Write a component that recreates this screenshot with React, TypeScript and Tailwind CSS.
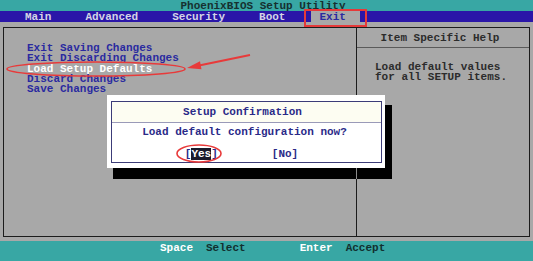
const menu = ["Main", "Advanced", "Security", "Boot"];

const exitItems = [
  "Exit Saving Changes",
  "Exit Discarding Changes",
  "Load Setup Defaults",
  "Discard Changes",
  "Save Changes",
];

function Overlay() {
  // red annotation marks drawn over the screenshot
  return (
    <svg
      className="absolute left-0 top-0 pointer-events-none"
      width={533}
      height={261}
      viewBox="0 0 533 261"
    >
      <ellipse cx={96} cy={69} rx={89} ry={7} fill="none" stroke="#e83a3a" strokeWidth={1.6} />
      <ellipse cx={199} cy={153.5} rx={22} ry={8.5} fill="none" stroke="#e83a3a" strokeWidth={1.6} />
      <line x1={250} y1={55} x2={199} y2={65.5} stroke="#e83a3a" strokeWidth={2} />
      <polygon points="187,68 200,61.3 201.5,69.3" fill="#e83a3a" />
    </svg>
  );
}

export default function App() {
  return (
    <div className="relative flex h-[261px] w-[533px] flex-col overflow-hidden font-['Liberation_Mono',monospace] text-[11px] font-bold leading-[10px]">
      <div className="flex h-[11px] items-center justify-center bg-[#38a7a4] pr-[7px] text-[#163030]">
        PhoenixBIOS Setup Utility
      </div>

      <div className="flex h-[11px] items-stretch gap-[18px] bg-[#2a16a8] pl-[17px] text-[#d4d4e6]">
        {menu.map((m) => (
          <span key={m} className="flex items-center px-2">
            {m}
          </span>
        ))}
        <span className="flex items-center bg-[#a8a8a8] pl-2 pr-[14px] text-[#2a2aa0]">Exit</span>
      </div>

      <div className="flex flex-1 bg-[#a8a8a8] px-[3px] pb-[4px] pt-[5px]">
        <div className="flex flex-1 border border-[#1c1c1c]">
          <div className="flex w-[353px] flex-col border-r border-[#1c1c1c] pl-[23px] pt-[15px] leading-[10.25px]">
            {exitItems.map((item) => (
              <div
                key={item}
                className={item === "Load Setup Defaults" ? "text-white" : "text-[#2a2aa0]"}
              >
                {item}
              </div>
            ))}
          </div>
          <div className="flex flex-1 flex-col text-[#2c2c2c]">
            <div className="flex h-[20px] items-center justify-center border-b border-[#5a5a5a] pr-[6px]">
              Item Specific Help
            </div>
            <div className="pl-[18px] pt-[14px]">
              <div>Load default values</div>
              <div>for all SETUP items.</div>
            </div>
          </div>
        </div>
      </div>

      <div className="flex h-[20px] bg-[#38a7a4] pl-[160px] pt-[2px]">
        <span className="text-white">Space</span>
        <span className="ml-[13px] text-[#123030]">Select</span>
        <span className="ml-[54px] text-white">Enter</span>
        <span className="ml-[13px] text-[#123030]">Accept</span>
      </div>

      {/* dialog shadow */}
      <div className="absolute left-[113px] top-[105px] h-[74px] w-[279px] bg-black">
        <div className="absolute left-[243px] top-0 h-full w-px bg-[#8a8a8a]" />
      </div>

      {/* confirmation dialog */}
      <div className="absolute left-[107px] top-[95px] flex h-[73px] w-[278px] bg-white pb-[5px] pl-[4px] pr-[3px] pt-[6px]">
        <div className="flex flex-1 flex-col border border-[#3c3c78] text-[#2a2a88]">
          <div className="flex h-[21px] items-center justify-center border-b border-[#9a9ab8] bg-[#fdfdf2] pr-[8px]">
            Setup Confirmation
          </div>
          <div className="pt-[4px] text-center pr-[4px]">Load default configuration now?</div>
          <div className="mt-[12px] flex justify-center gap-[54px] pr-[10px]">
            <span>
              [<span className="bg-[#1a1a2a] text-white">Yes</span>]
            </span>
            <span>[No]</span>
          </div>
        </div>
      </div>

      <div className="absolute left-[304px] top-[9px] h-[18px] w-[63px] border-2 border-[#e53a3a]" />

      <Overlay />
    </div>
  );
}
